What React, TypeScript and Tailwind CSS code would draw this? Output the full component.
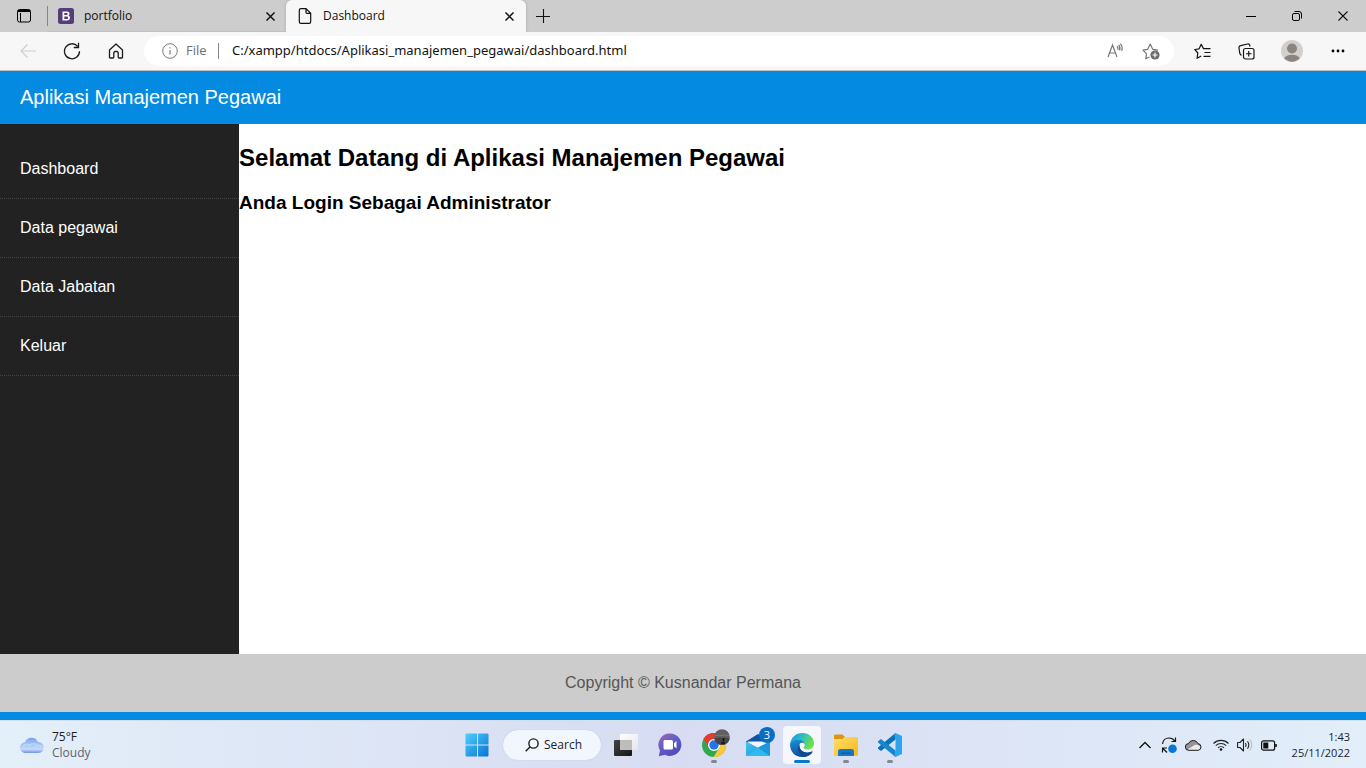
import React from "react";

const slot = "flex h-8 w-11 shrink-0 items-center justify-center";

function Close({ size }: { size: number }) {
  return (
    <svg width={size} height={size} viewBox="0 0 10 10" fill="none" stroke="#111" strokeWidth={size > 9 ? 1.1 : 1.6}>
      <path d="M.5.5l9 9M9.500.5l-9 9" />
    </svg>
  );
}

function TabStrip() {
  return (
    <div className="flex h-8 items-stretch bg-[#cdcdcd] text-[12px] text-[#111]">
      <button aria-label="Tab actions" className="flex w-12 items-center justify-center border-r border-transparent">
        <svg width="16" height="16" viewBox="0 0 16 16" fill="none" stroke="#000">
          <rect x="1.500" y="1.500" width="13" height="12.500" rx="2" />
          <path d="M2 3.500h12M2 2.500h12M4.500 5v9" />
        </svg>
      </button>
      <div className="my-1.5 -ml-px w-px bg-[#868686]" />
      <div className="flex w-[238px] items-center pr-[11px] pl-[10px] shadow-[inset_0_-1px_0_#c2c2c2]">
        <svg width="16" height="16" viewBox="0 0 16 16" className="mr-[10px]">
          <rect width="16" height="16" rx="2.500" fill="#563d7c" />
          <path fillRule="evenodd" fill="#fff" d="M4.500 3.500h4.300c1.700 0 2.700.8 2.700 2.200 0 .9-.5 1.600-1.300 1.900 1.100.2 1.800 1 1.800 2.200 0 1.700-1.200 2.700-3.200 2.700H4.500zM6.300 5v2.100h1.900c1 0 1.500-.4 1.500-1.100S9.200 5 8.300 5zm0 3.500V11h2.200c1.100 0 1.600-.4 1.600-1.200 0-.9-.6-1.300-1.700-1.300z" />
        </svg>
        <span className="flex-1">portfolio</span>
        <button aria-label="Close portfolio"><Close size={9} /></button>
      </div>
      <div className="flex w-60 items-center rounded-t-md bg-[#f7f7f7] pr-[12px] pl-[12px] shadow-[0_0_3px_#8888]">
        <svg width="14" height="16" viewBox="0 0 14 16" fill="none" stroke="#111" strokeWidth="1.200" className="mr-[11px]">
          <path d="M8 .6H3A1.700 1.700 0 0 0 1.300 2.300v11.400c0 .9.700 1.700 1.700 1.700h8c.9 0 1.700-.8 1.700-1.700V5.300L8 .6v3.700c0 .6.400 1 1 1h3.700" />
        </svg>
        <span className="flex-1">Dashboard</span>
        <button aria-label="Close Dashboard"><Close size={9} /></button>
      </div>
      <button aria-label="New tab" className="flex w-[34px] items-center justify-center">
        <svg width="14" height="14" viewBox="0 0 14 14" stroke="#111" strokeWidth="1.100"><path d="M7.500 0v14M0 7.500h14" /></svg>
      </button>
      <div className="flex-1" />
      <button aria-label="Minimize" className="flex w-[46px] items-center justify-center">
        <svg width="10" height="10" viewBox="0 0 10 10" stroke="#000"><path d="M0 5.500h10" /></svg>
      </button>
      <button aria-label="Restore" className="flex w-[46px] items-center justify-center">
        <svg width="10" height="10" viewBox="0 0 10 10" fill="none" stroke="#000">
          <rect x=".5" y="2.500" width="7" height="7" rx="1.500" />
          <path d="M2.500.5H7A2.500 2.500 0 0 1 9.500 3v4.500" />
        </svg>
      </button>
      <button aria-label="Close window" className="flex w-[46px] items-center justify-center"><Close size={10} /></button>
    </div>
  );
}

function Toolbar() {
  return (
    <div className="flex h-[39px] items-center border-b border-[#c4c0bc] bg-[#f7f7f7] px-1.5">
      <button aria-label="Back" className={slot}>
        <svg width="16" height="14" viewBox="0 0 16 14" fill="none" stroke="#cfcfcf" strokeWidth="1.200"><path d="M16 7H1M7.500.5L1 7l6.500 6.500" /></svg>
      </button>
      <button aria-label="Refresh" className={slot}>
        <svg width="18" height="18" viewBox="0 0 18 18" fill="none" stroke="#1b1b1b" strokeWidth="1.300">
          <path d="M16.500 9.200A7.500 7.500 0 1 1 14.700 4.400M15.500.8v4.700h-4.700" />
        </svg>
      </button>
      <button aria-label="Home" className={slot}>
        <svg width="16" height="16" viewBox="0 0 16 16" fill="none" stroke="#1b1b1b" strokeWidth="1.300" strokeLinejoin="round">
          <path d="M1.500 7L8 1l6.500 6v7.200c0 .5-.3.8-.8.800H11c-.5 0-.8-.3-.8-.8V10c0-1-.6-1.500-1.500-1.500H7.300c-.9 0-1.500.5-1.500 1.500v4.200c0 .5-.3.800-.8.800H2.300c-.5 0-.8-.3-.8-.8z" />
        </svg>
      </button>
      <div className="mx-1.5 flex h-[30px] flex-1 items-center rounded-full bg-white pr-3.5 pl-[18px]">
        <svg width="16" height="16" viewBox="0 0 16 16" fill="none" stroke="#7b7b7b">
          <circle cx="8" cy="8" r="7.300" /><path d="M8 7v4.500M8 4.200v1.300" strokeWidth="1.200" />
        </svg>
        <label htmlFor="address" className="ml-2 w-8 text-[13px] text-[#6e6e6e]">File</label>
        <div className="mr-[13px] h-4 w-px bg-[#858585]" />
        <input id="address" className="min-w-0 flex-1 bg-transparent font-['Noto_Sans',sans-serif] text-[13px] text-[#111] outline-none" defaultValue="C:/xampp/htdocs/Aplikasi_manajemen_pegawai/dashboard.html" />
        <button aria-label="Read aloud" className="mr-[18px]">
          <svg width="18" height="16" viewBox="0 0 18 16" fill="none" stroke="#767676" strokeWidth="1.200">
            <path d="M2 14L6.500 2l4.500 12M3.500 10h6M11 3.300c1 .9 1.200 2.200.9 3.600M12.500 1.800c1.500 1.500 1.800 3.500 1.100 5.600M14.200.6c2 2 2.400 4.500 1.500 7.300" />
          </svg>
        </button>
        <button aria-label="Add to favorites">
          <svg width="18" height="18" viewBox="0 0 18 18" fill="none" stroke="#767676" strokeWidth="1.200" strokeLinejoin="round">
            <path d="M7.500 15l-3.700 1.800.7-5L1 8.100 5.700 7.300 8.200 2l2.500 5.300 5.300.8" />
            <circle cx="13" cy="13" r="4.600" fill="#6b6b6b" stroke="none" />
            <path d="M13 10.500v5M10.500 13h5" stroke="#fff" />
          </svg>
        </button>
      </div>
      <button aria-label="Favorites" className={slot}>
        <svg width="17" height="17" viewBox="0 0 17 17" fill="none" stroke="#151515" strokeWidth="1.200" strokeLinejoin="round">
          <path d="M9.500 5.600L7.200 1.300 5.100 5.800.8 6.500l3 3.500-.7 5.300 4.100-2.300M9 5.600h7.500M10.500 9.500h6M9.500 13.300h7" />
        </svg>
      </button>
      <button aria-label="Collections" className={slot}>
        <svg width="17" height="17" viewBox="0 0 17 17" fill="none" stroke="#151515" strokeWidth="1.200">
          <rect x="5.500" y="5.500" width="10.500" height="10.500" rx="2" /><path d="M10.750 8v5.500M8 10.750h5.500" />
          <path d="M3.500 12.300C2.400 12 2 11.200 1.700 10L1 5c-.2-1.300.5-2.200 1.700-2.400L9.500 1c1.200-.3 2 .5 2.300 1.500l.3 1" />
        </svg>
      </button>
      <button aria-label="Profile" className="flex w-12 items-center justify-center">
        <svg width="22" height="22" viewBox="0 0 22 22">
          <circle cx="11" cy="11" r="11" fill="#d3d0cc" /><circle cx="11" cy="8.500" r="5" fill="#8b8581" />
          <path d="M3.300 18.500a8 5 0 0 1 15.400 0A11 11 0 0 1 3.300 18.500z" fill="#8b8581" />
        </svg>
      </button>
      <button aria-label="Settings and more" className={slot}>
        <svg width="14" height="4" viewBox="0 0 14 4"><circle cx="2" cy="2" r="1.400" /><circle cx="7" cy="2" r="1.400" /><circle cx="12" cy="2" r="1.400" /></svg>
      </button>
    </div>
  );
}

const links = ["Dashboard", "Data pegawai", "Data Jabatan", "Keluar"];

function Page() {
  return (
    <div className="flex flex-1 flex-col border-b-8 border-[#048ae0] bg-white font-['Liberation_Sans',Arial,sans-serif]">
      <header className="bg-[#048ae0] px-5 py-[15px] text-[20px] leading-[23px] text-white">Aplikasi Manajemen Pegawai</header>
      <div className="flex flex-1">
        <nav className="w-[17.5%] bg-[#222] pt-4">
          <ul>
            {links.map((name) => (
              <li key={name} className="border-b border-dotted border-[#444]">
                <a href="#" className="block px-5 py-5 text-base leading-[18px] text-white">{name}</a>
              </li>
            ))}
          </ul>
        </nav>
        <main className="flex-1 pt-5 text-black">
          <h1 className="text-2xl leading-7 font-bold">Selamat Datang di Aplikasi Manajemen Pegawai</h1>
          <h2 className="mt-5 text-[19px] leading-[21px] font-bold">Anda Login Sebagai Administrator</h2>
        </main>
      </div>
      <footer className="bg-[#ccc] py-5 text-center text-base leading-[18px] text-[#555]">Copyright © Kusnandar Permana</footer>
    </div>
  );
}

function TaskButton({ label, state, children }: { label: string; state?: "open" | "active"; children: React.ReactNode }) {
  return (
    <button aria-label={label} className="relative flex h-12 w-11 items-center justify-center">
      {state === "active" && <span className="absolute inset-x-[3px] top-[5px] bottom-[5px] rounded bg-[#f5f7fd]" />}
      <span className="relative">{children}</span>
      {state === "open" && <span className="absolute bottom-[6px] h-[3px] w-1.5 rounded-full bg-[#85878f]" />}
      {state === "active" && <span className="absolute bottom-[6px] h-[3px] w-4 rounded-full bg-[#0678d4]" />}
    </button>
  );
}

function Taskbar() {
  return (
    <div className="grid h-12 grid-cols-[1fr_auto_1fr] border-t border-[#d3dfec] bg-linear-to-r from-[#e3eff9] via-[#d7dcf2] to-[#e2eefa] text-[#1d1d1f]">
      <button className="flex items-center pl-5 text-left text-[12px] leading-4">
        <svg width="24" height="16" viewBox="0 0 24 16" className="mr-2">
          <defs>
            <linearGradient id="cl" x2="0" y2="1"><stop stopColor="#7aa3ee" /><stop offset=".75" stopColor="#c8daf8" /><stop offset="1" stopColor="#6795e8" /></linearGradient>
          </defs>
          <path d="M5.500 16A5.300 5.300 0 0 1 5 5.300 7 7 0 0 1 18 5a5.500 5.500 0 0 1 .5 11z" fill="url(#cl)" />
          <path d="M3 9.500c1.500-2.500 4.500-3 6.500-1 2-2.500 6-2.500 7.500 0 2-.8 4-.2 5 1.500" fill="none" stroke="#dce8fb" strokeOpacity=".5" strokeWidth="1.300" />
        </svg>
        <span><span className="block">75°F</span><span className="block text-[#5d646d]">Cloudy</span></span>
      </button>
      <div className="flex items-center pl-px">
        <TaskButton label="Start">
          <svg width="24" height="24" viewBox="0 0 24 24">
            <defs><linearGradient id="wi" x2="1" y2="1"><stop stopColor="#4fd0fc" /><stop offset="1" stopColor="#0673d2" /></linearGradient></defs>
            <path fill="url(#wi)" d="M1.500.5H12V11.500H.5v-10a1 1 0 0 1 1-1zM13 .5h9.500a1 1 0 0 1 1 1v10H13zM.5 12.500H12v11H1.500a1 1 0 0 1-1-1zM13 12.500h10.500v10a1 1 0 0 1-1 1H13z" />
          </svg>
        </TaskButton>
        <button className="mr-[3px] ml-1 flex h-[30px] w-[98px] items-center rounded-full bg-[#f2f6fe] pl-[22px] text-[12px] shadow-[0_0_1px_#a9b2c8]">
          <svg width="14" height="14" viewBox="0 0 14 14" fill="none" stroke="#1b1b1b" strokeWidth="1.400" className="mr-[5px]"><circle cx="8.500" cy="5.500" r="4.600" /><path d="M5.200 8.800L.7 13.300" /></svg>
          Search
        </button>
        <TaskButton label="Task view">
          <svg width="24" height="22" viewBox="0 0 24 22">
            <defs>
              <linearGradient id="tb" x2="1" y2="1"><stop stopColor="#444" /><stop offset="1" stopColor="#151515" /></linearGradient>
              <linearGradient id="tw" x2="1" y2="1"><stop stopColor="#fff" /><stop offset="1" stopColor="#e6e6e6" /></linearGradient>
            </defs>
            <rect y="6" width="18" height="16" rx="1" fill="url(#tb)" /><rect x="6" width="18" height="16" rx="1" fill="url(#tw)" /><path d="M6 6h12v10H6z" fill="#bdbdbd" />
          </svg>
        </TaskButton>
        <TaskButton label="Chat">
          <svg width="24" height="24" viewBox="0 0 24 24">
            <defs><linearGradient id="ch" x2=".7" y2="1"><stop stopColor="#a16ba8" /><stop offset=".5" stopColor="#635cc8" /><stop offset="1" stopColor="#4c49b8" /></linearGradient></defs>
            <path d="M12.300.5a11.200 11.200 0 1 1-5.200 21.200L.8 23.300 2 17.500A11.300 11.300 0 0 1 12.300.5z" fill="url(#ch)" />
            <rect x="5.500" y="7" width="9.500" height="9.500" rx="1.500" fill="#fff" /><path d="M16 10.300L18.500 8v7.500L16 13.200z" fill="#fff" />
          </svg>
        </TaskButton>
        <TaskButton label="Chrome" state="open">
          <svg width="32" height="32" viewBox="-1 -1 32 32">
            <circle cx="15" cy="15" r="12" fill="#2da94f" />
            <path d="M15 15L4.600 9A12 12 0 0 1 25.400 9z" fill="#e33b2e" />
            <path d="M15 9h10.400A12 12 0 0 1 14.500 27L20.200 18z" fill="#fcc934" />
            <path d="M4.600 9A12 12 0 0 1 25.400 9H15l-5 9z" fill="#e33b2e" />
            <circle cx="15" cy="15" r="6" fill="#fff" /><circle cx="15" cy="15" r="4.700" fill="#2675e8" />
            <circle cx="23" cy="7" r="7.800" fill="#606060" /><path d="M15.300 8.500c4-1 11-1.500 15.400 0a7.800 7.800 0 0 1-15.400 0z" fill="#454545" /><path d="M16 5.500h14" stroke="#8a8a8a" strokeOpacity=".5" /><path d="M24.500 8v3.500M22 13h4" stroke="#111" strokeWidth="1.500" />
          </svg>
        </TaskButton>
        <TaskButton label="Mail, 3 new">
          <svg width="24" height="24" viewBox="0 0 24 24">
            <defs><linearGradient id="ma" x2="1" y2="1"><stop stopColor="#41c8f2" /><stop offset="1" stopColor="#168ad8" /></linearGradient></defs>
            <path d="M0 8.500L12 1l12 7.500V11H0z" fill="#0f55a0" /><path d="M2 8.500h20V13l-10 4L2 11z" fill="#f4f5f8" />
            <path d="M0 8.500l12 6.200 12-6.200V23H0z" fill="#27a8e5" /><path d="M0 8.500L24 23H0z" fill="url(#ma)" /><path d="M0 23l12-8.300L24 8.500V23z" fill="#2fb5ec" /><path d="M12 14.700L24 23H0z" fill="#30b9ee" /><path d="M12 14.700L24 8.500V23z" fill="#1d97dc" />
          </svg>
          <span className="absolute -top-[6px] left-[13px] flex h-4 w-4 items-center justify-center rounded-full bg-[#0a6dc4] text-[11px] text-white">3</span>
        </TaskButton>
        <TaskButton label="Edge" state="active">
          <svg width="24" height="24" viewBox="0 0 24 24">
            <defs>
              <linearGradient id="e1" x2="1" y2=".4"><stop stopColor="#1592d8" /><stop offset=".5" stopColor="#2bbcc8" /><stop offset="1" stopColor="#70df4c" /></linearGradient>
              <linearGradient id="e2" x2=".3" y2="1"><stop stopColor="#1a91dc" /><stop offset="1" stopColor="#0f4f9e" /></linearGradient>
            </defs>
            <path d="M0 11.500C.8 4.500 6 0 12.200 0 19.500 0 24 5 24 10.200c0 3.800-2.600 6.300-6 6.300-2.600 0-4.500-1-4.500-1.900 0-.6 1.200-1 1.200-2.900 0-2.600-3-5-7-5C4 6.700 1 8.800 0 11.500z" fill="url(#e1)" />
            <path d="M0 11.500C.8 8.500 4.200 6.600 8 6.600c3.500 0 6 1.600 6.700 4.400-1-1.200-2.700-1.500-4-.9-1.500 1-1.700 3-1 5 1.500 4 6 5.700 11.800 4.300l1 .2A12 12 0 0 1 12 24C5 24 0 18.500 0 11.500z" fill="url(#e2)" />
            <path d="M9.700 11.200c-1.200 4.300 2.500 8.300 7.300 8.300 2.200 0 3.800-.6 5-1.200.5-.2.900.2.600.7A12 12 0 0 1 15.500 23.500C9.500 22.500 5.500 16 9.700 11.200z" fill="#11488f" />
          </svg>
        </TaskButton>
        <TaskButton label="File Explorer" state="open">
          <svg width="24" height="22" viewBox="0 0 24 22">
            <defs><linearGradient id="fo" x2="1" y2="1"><stop stopColor="#ffdc68" /><stop offset="1" stopColor="#f5b91f" /></linearGradient></defs>
            <path d="M0 1.500Q0 .5 1 .5h7.500L11 3l-2.500 3H0z" fill="#dc9510" /><path d="M0 5h8.500L11 3h12q1 0 1 1v17q0 .8-1 .8H1q-1 0-1-.8z" fill="url(#fo)" />
            <path d="M4 22v-4.500q0-2.500 2.500-2.500h11q2.500 0 2.500 2.500V22z" fill="#1676c7" /><path d="M7 18.500h10v1.200H7z" fill="#0e5aa3" />
          </svg>
        </TaskButton>
        <TaskButton label="Visual Studio Code" state="open">
          <svg width="24" height="24" viewBox="0 0 24 24">
            <path d="M17.500 0v6.500L3 18 0 15.800v-1.200z" fill="#0872b8" /><path d="M0 9.400V8.200L3 6l14.500 11.500V24z" fill="#1686cf" />
            <path d="M17.500 0L24 3v18l-6.500 3-1.200-1 1.200-5.500v-11L16.300 1z" fill="#2ba6ec" />
          </svg>
        </TaskButton>
      </div>
      <div className="flex items-center justify-end pr-4">
        <button aria-label="Show hidden icons" className="flex w-6 justify-center"><svg width="12" height="8" viewBox="0 0 12 8" fill="none" stroke="#111" strokeWidth="1.300"><path d="M.5 7L6 1.500 11.500 7" /></svg></button>
        <button aria-label="Updates" className="flex w-6 justify-center">
          <svg width="18" height="18" viewBox="0 0 18 18" fill="none" stroke="#151515" strokeWidth="1.200">
            <path d="M2.500 8C3 4.500 5.500 2 9 2c2.500 0 4.500 1.200 5.700 3M15.500 1.500v4h-4M2.500 16.500v-4.500h4.500M3 12.500l4 4" /><circle cx="12.500" cy="12.700" r="4.300" fill="#0878d8" stroke="none" />
          </svg>
        </button>
        <button aria-label="OneDrive" className="mr-1 flex w-6 justify-center">
          <svg width="17" height="12" viewBox="0 0 17 12">
            <path d="M4 11.300A3.400 3.400 0 0 1 3.500 4.500 5.200 5.200 0 0 1 13 4.600a3.400 3.400 0 0 1 .3 6.700z" fill="#949494" />
            <path d="M2.500 10.500L10 5.800c3-.3 5.700 1.500 5.700 3.200 0 1-1 2-2.400 2H4z" fill="#ebebeb" />
            <path d="M4 11.300A3.400 3.400 0 0 1 3.500 4.500 5.200 5.200 0 0 1 13 4.600a3.400 3.400 0 0 1 .3 6.700z" fill="none" stroke="#1f1f1f" />
          </svg>
        </button>
        <button aria-label="Wi-Fi" className="flex w-6 justify-center">
          <svg width="16" height="12" viewBox="0 0 16 12" fill="none" stroke="#222" strokeWidth="1.100"><path d="M.5 4.500a10.500 10.500 0 0 1 15 0M2.800 6.700a7.400 7.400 0 0 1 10.400 0M5 8.900a4.300 4.300 0 0 1 6 0" /><circle cx="8" cy="10.500" r="1.300" fill="#111" stroke="none" /></svg>
        </button>
        <button aria-label="Volume" className="flex w-6 justify-center">
          <svg width="16" height="14" viewBox="0 0 16 14" fill="none" stroke="#222" strokeWidth="1.100" strokeLinejoin="round"><path d="M.6 4.500H3L6.500 1v12L3 9.500H.6zM8.500 5q1.300 2 0 4M10.500 3.300q2.600 3.700 0 7.400" /><path d="M12.800 1.500q3.800 5.500 0 11" stroke="#b8bdc5" /></svg>
        </button>
        <button aria-label="Battery" className="flex w-6 justify-center">
          <svg width="16" height="11" viewBox="0 0 16 11" fill="none" stroke="#111" strokeWidth="1.200"><rect x=".6" y=".8" width="13" height="9.400" rx="2" /><path d="M2.300 2.500h5v6h-5z" fill="#111" stroke="none" /><path d="M15 4v3" strokeWidth="1.600" /></svg>
        </button>
        <button className="w-[69px] text-right text-[11px] leading-4"><span className="block">1:43</span><span className="block">25/11/2022</span></button>
      </div>
    </div>
  );
}

export default function App() {
  return (
    <div className="flex min-h-screen flex-col font-['Open_Sans','Noto_Sans',sans-serif]">
      <TabStrip />
      <Toolbar />
      <Page />
      <Taskbar />
    </div>
  );
}
